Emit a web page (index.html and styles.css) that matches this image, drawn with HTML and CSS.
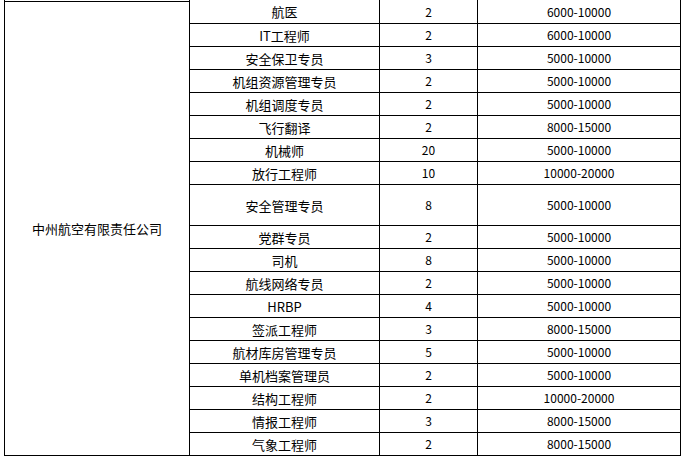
FILE: index.html
```html
<!DOCTYPE html>
<html lang="zh">
<head>
<meta charset="utf-8">
<title>中州航空有限责任公司</title>
<link rel="stylesheet" href="styles.css">
</head>
<body>
<div class="sheet">
  <div class="cell company">中州航空有限责任公司</div>

  <div class="cell">航医</div><div class="cell num">2</div><div class="cell num">6000-10000</div>
  <div class="cell">IT工程师</div><div class="cell num">2</div><div class="cell num">6000-10000</div>
  <div class="cell">安全保卫专员</div><div class="cell num">3</div><div class="cell num">5000-10000</div>
  <div class="cell">机组资源管理专员</div><div class="cell num">2</div><div class="cell num">5000-10000</div>
  <div class="cell">机组调度专员</div><div class="cell num">2</div><div class="cell num">5000-10000</div>
  <div class="cell">飞行翻译</div><div class="cell num">2</div><div class="cell num">8000-15000</div>
  <div class="cell">机械师</div><div class="cell num">20</div><div class="cell num">5000-10000</div>
  <div class="cell">放行工程师</div><div class="cell num">10</div><div class="cell num">10000-20000</div>
  <div class="cell">安全管理专员</div><div class="cell num">8</div><div class="cell num">5000-10000</div>
  <div class="cell">党群专员</div><div class="cell num">2</div><div class="cell num">5000-10000</div>
  <div class="cell">司机</div><div class="cell num">8</div><div class="cell num">5000-10000</div>
  <div class="cell">航线网络专员</div><div class="cell num">2</div><div class="cell num">5000-10000</div>
  <div class="cell">HRBP</div><div class="cell num">4</div><div class="cell num">5000-10000</div>
  <div class="cell">签派工程师</div><div class="cell num">3</div><div class="cell num">8000-15000</div>
  <div class="cell">航材库房管理专员</div><div class="cell num">5</div><div class="cell num">5000-10000</div>
  <div class="cell">单机档案管理员</div><div class="cell num">2</div><div class="cell num">5000-10000</div>
  <div class="cell">结构工程师</div><div class="cell num">2</div><div class="cell num">10000-20000</div>
  <div class="cell">情报工程师</div><div class="cell num">3</div><div class="cell num">8000-15000</div>
  <div class="cell">气象工程师</div><div class="cell num">2</div><div class="cell num">8000-15000</div>
</div>
</body>
</html>
```

FILE: styles.css
```css
html, body {
  margin: 0;
  padding: 0;
  background: #fff;
}

body {
  font-family: "Noto Sans CJK SC", "Noto Sans", sans-serif;
  font-size: 13px;
  color: #000;
}

.sheet {
  display: grid;
  grid-template-columns: 184px 189px 97px 202px;
  grid-template-rows: 23px repeat(7, 22px) 40px repeat(10, 22px);
  gap: 1px;
  background: #000;
  padding: 0 1px 1px 1px;
  margin-left: 4px;
  width: fit-content;
}

.cell {
  background: #fff;
  display: flex;
  align-items: center;
  justify-content: center;
  line-height: 1;
  white-space: nowrap;
  box-sizing: border-box;
}

.company {
  grid-column: 1;
  grid-row: 1 / span 19;
  border-top: 1px solid #fff;
  box-shadow: inset 0 1px 0 #000;
}

.num {
  font-size: 12px;
}
```
